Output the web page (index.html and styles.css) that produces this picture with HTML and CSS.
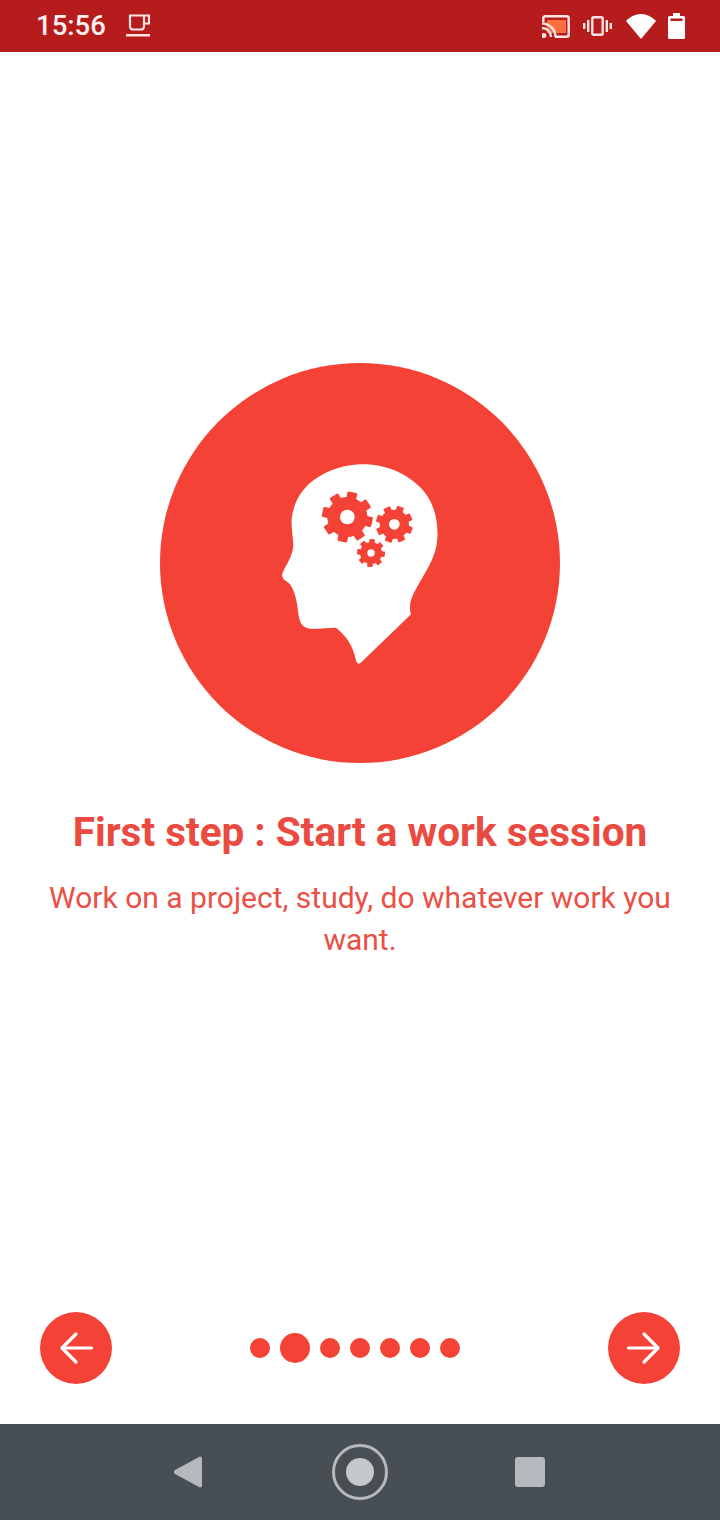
FILE: index.html
```html
<!DOCTYPE html>
<html lang="en">
<head>
  <meta charset="UTF-8">
  <meta name="viewport" content="width=device-width, initial-scale=1.0">
  <title>First step</title>
  <link rel="stylesheet" href="styles.css">
</head>
<body>
  <div class="screen">
    <div class="status-bar">
      <span class="time">15:56</span>
      <svg class="icon-cup" viewBox="0 0 24 24">
        <path d="M4 1.500h14v11a3 3 0 0 1-3 3H7a3 3 0 0 1-3-3zM18 1.500h5v8h-5" fill="none" stroke="#fbe3e3" stroke-width="2.200"/>
        <rect x="0" y="20" width="24" height="2.500" fill="#fbe3e3"/>
      </svg>
      <div class="status-right">
        <svg class="icon-cast" viewBox="0 0 28 23">
          <rect x="5" y="5" width="19" height="13" fill="#ff6e40"/>
          <path d="M1.300 7V3.300a2 2 0 0 1 2-2h22a2 2 0 0 1 1.400 2v16.400a2 2 0 0 1-2 2H13" fill="none" stroke="#fbe3e3" stroke-width="2.500"/>
          <path d="M0 8.500a13.500 13.500 0 0 1 13.500 13.500M0 13a9 9 0 0 1 9 9" fill="none" stroke="#fbe3e3" stroke-width="2.400"/>
          <circle cx="1.800" cy="20.500" r="2.500" fill="#fbe3e3"/>
        </svg>
        <svg class="icon-vibrate" viewBox="0 0 29 20">
          <rect x="9.300" y="1.200" width="10.400" height="17.600" rx="1.500" fill="none" stroke="#fbe3e3" stroke-width="2.400"/>
          <path d="M5.200 4v12M23.800 4v12M1.200 7v6M27.800 7v6" stroke="#fbe3e3" stroke-width="2.400"/>
        </svg>
        <svg class="icon-wifi" viewBox="0 0 30 25">
          <path d="M15 25L0 7C4 3 9 0 15 0S26 3 30 7z" fill="#fff"/>
        </svg>
        <svg class="icon-battery" viewBox="0 0 17 26">
          <path d="M5 0h7v3h3.500a1.500 1.500 0 0 1 1.500 1.500v20a1.500 1.500 0 0 1-1.500 1.500h-14a1.500 1.500 0 0 1-1.500-1.500v-20a1.500 1.500 0 0 1 1.500-1.500h3.500z" fill="#fff"/>
          <rect x="2.500" y="5.500" width="12" height="2.500" fill="#b71c1c"/>
        </svg>
      </div>
    </div>

    <div class="content">
      <div class="hero">
        <svg class="head" viewBox="0 0 600 675">
          <defs>
            <g id="gear">
              <circle r="60"/>
              <rect x="-15" y="-76" width="30" height="152" rx="4"/>
              <rect x="-15" y="-76" width="30" height="152" rx="4" transform="rotate(45)"/>
              <rect x="-15" y="-76" width="30" height="152" rx="4" transform="rotate(90)"/>
              <rect x="-15" y="-76" width="30" height="152" rx="4" transform="rotate(135)"/>
            </g>
          </defs>
          <path fill="#fff" d="M300 40C380 38 450 70 495 125C525 165 535 215 532 265C528 320 495 365 470 410C452 440 445 465 453 490L304 634C296 642 290 638 287 625C280 590 265 560 228 530C200 530 170 535 150 533C128 530 120 518 116 495C112 455 105 420 90 400C78 388 62 385 68 365C75 345 95 325 100 285C100 265 94 235 95 205C100 150 130 105 175 78C212 55 255 42 300 40z"/>
          <use href="#gear" class="gear" transform="translate(262 198) rotate(12)"/>
          <circle class="hole" cx="262" cy="198" r="22"/>
          <use href="#gear" class="gear" transform="translate(403 220) rotate(20) scale(.73)"/>
          <circle class="hole" cx="403" cy="220" r="16"/>
          <use href="#gear" class="gear" transform="translate(333 306) rotate(5) scale(.55)"/>
          <circle class="hole" cx="333" cy="306" r="11"/>
        </svg>
      </div>
      <h1 class="title">First step : Start a work session</h1>
      <p class="desc">Work on a project, study, do whatever work you want.</p>
    </div>

    <div class="controls">
      <button class="round-btn" type="button" aria-label="Back">
        <svg viewBox="0 0 36 36"><path d="M33.500 18H4M18 4L4 18L18 32" fill="none" stroke="#fff" stroke-width="3.200" stroke-linecap="round" stroke-linejoin="round"/></svg>
      </button>
      <div class="dots">
        <span class="dot"></span>
        <span class="dot active"></span>
        <span class="dot"></span>
        <span class="dot"></span>
        <span class="dot"></span>
        <span class="dot"></span>
        <span class="dot"></span>
      </div>
      <button class="round-btn" type="button" aria-label="Next">
        <svg viewBox="0 0 36 36"><path d="M2.500 18H32M18 4L32 18L18 32" fill="none" stroke="#fff" stroke-width="3.200" stroke-linecap="round" stroke-linejoin="round"/></svg>
      </button>
    </div>

    <div class="nav-bar">
      <svg class="nav-back" viewBox="0 0 30 34">
        <path d="M27 1.500a2 2 0 0 1 2 2v27a2 2 0 0 1-2 2L2 19a2.500 2.500 0 0 1 0-4z" fill="#b5b9bb"/>
      </svg>
      <div class="nav-home"><span></span></div>
      <div class="nav-square"></div>
    </div>
  </div>
</body>
</html>
```
FILE: styles.css
```css
:root {
  --red: #f44336;
  --dark-red: #b71c1c;
  --nav: #474f55;
  --nav-icon: #b5b9bb;
}

* {
  margin: 0;
  padding: 0;
  box-sizing: border-box;
}

body {
  font-family: Roboto, sans-serif;
  background: #fff;
}

.screen {
  width: 720px;
  height: 1520px;
  display: flex;
  flex-direction: column;
  overflow: hidden;
}

.status-bar {
  height: 52px;
  background: var(--dark-red);
  display: flex;
  align-items: center;
  padding: 0 35px 0 36px;
  flex-shrink: 0;
}

.time {
  color: #fdf0f0;
  font-size: 27.5px;
  font-weight: 500;
  line-height: 52px;
}

.icon-cup {
  width: 24px;
  height: 24px;
  margin-left: 20px;
}

.status-right {
  margin-left: auto;
  display: flex;
  align-items: center;
}

.icon-cast {
  width: 28px;
  height: 23px;
}

.icon-vibrate {
  width: 29px;
  height: 20px;
  margin-left: 13px;
}

.icon-wifi {
  width: 30px;
  height: 25px;
  margin-left: 14px;
}

.icon-battery {
  width: 17px;
  height: 26px;
  margin-left: 12px;
}

.content {
  flex: 1;
  padding-top: 311px;
  display: flex;
  flex-direction: column;
  align-items: center;
}

.hero {
  width: 400px;
  height: 400px;
  border-radius: 50%;
  background: var(--red);
  display: flex;
  align-items: center;
  justify-content: center;
}

.head {
  width: 200px;
  height: 225px;
}

.gear {
  fill: var(--red);
}

.head .hole {
  fill: #fff;
}

.title {
  margin-top: 45px;
  color: #ea4a3f;
  font-size: 40.5px;
  font-weight: 700;
  line-height: 48px;
  text-align: center;
  white-space: nowrap;
}

.desc {
  width: 640px;
  margin-top: 21px;
  color: #eb4f45;
  font-size: 30px;
  line-height: 42px;
  text-align: center;
}

.controls {
  height: 112px;
  padding: 0 40px;
  display: flex;
  align-items: flex-start;
  justify-content: space-between;
  flex-shrink: 0;
}

.round-btn {
  width: 72px;
  height: 72px;
  border: none;
  border-radius: 50%;
  background: var(--red);
  display: flex;
  align-items: center;
  justify-content: center;
}

.round-btn svg {
  width: 36px;
  height: 36px;
}

.dots {
  height: 72px;
  margin-right: 10px;
  display: flex;
  align-items: center;
  gap: 10px;
}

.dot {
  width: 20px;
  height: 20px;
  border-radius: 50%;
  background: var(--red);
}

.dot.active {
  width: 30px;
  height: 30px;
}

.nav-bar {
  height: 96px;
  background: var(--nav);
  display: flex;
  align-items: center;
  flex-shrink: 0;
  padding-left: 173px;
}

.nav-back {
  width: 30px;
  height: 34px;
}

.nav-home {
  width: 56px;
  height: 56px;
  margin-left: 129px;
  border: 3px solid var(--nav-icon);
  border-radius: 50%;
  display: flex;
  align-items: center;
  justify-content: center;
}

.nav-home span {
  width: 28px;
  height: 28px;
  border-radius: 50%;
  background: #c4c8ca;
}

.nav-square {
  width: 30px;
  height: 30px;
  margin-left: 127px;
  border-radius: 3px;
  background: var(--nav-icon);
}
```
